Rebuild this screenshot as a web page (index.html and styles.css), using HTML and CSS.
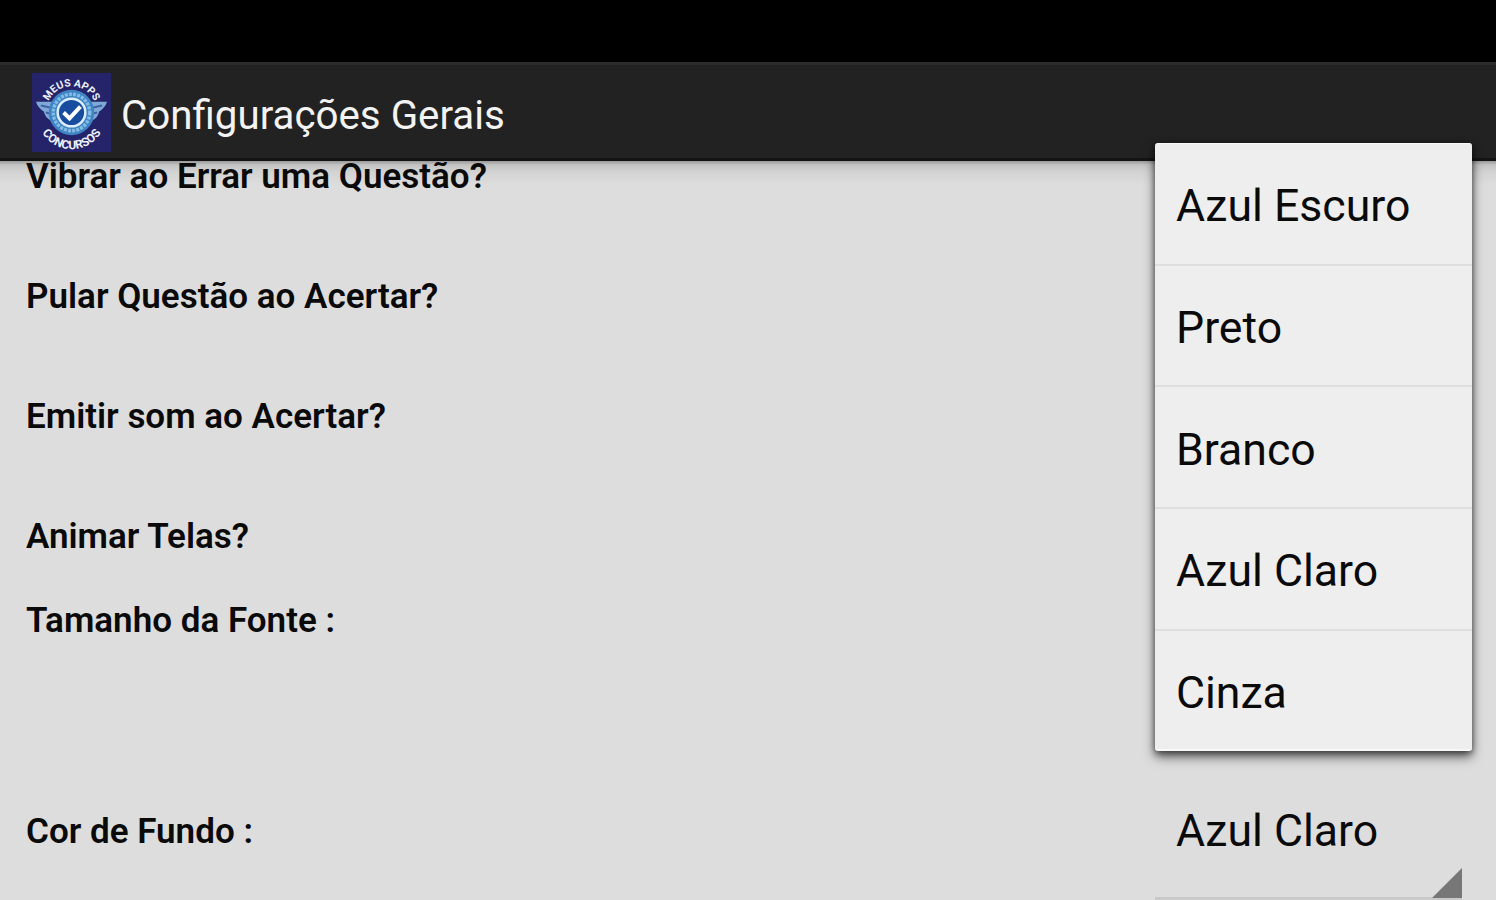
FILE: index.html
```html
<!DOCTYPE html>
<html lang="pt-BR">
<head>
    <meta charset="UTF-8">
    <meta name="viewport" content="width=device-width, initial-scale=1.0">
    <title>Configurações Gerais</title>
    <link rel="stylesheet" href="styles.css">
</head>
<body>
    <div class="status-bar"></div>
    <header class="action-bar">
        <svg class="logo" viewBox="0 0 80 80">
            <defs>
                <path id="arcTop" d="M14.500 39A25.500 25.500 0 0 1 65.500 39" />
                <path id="arcBottom" d="M5.500 48A35 35 0 0 0 74.500 48" />
            </defs>
            <rect width="80" height="80" fill="#25246b" />
            <path d="M4 29L26 29L31 54Q22 54 19 48Q13 45 12 39Q6 35 4 29Z" fill="#7fa9d6" />
            <path d="M76 29L54 29L49 54Q58 54 61 48Q67 45 68 39Q74 35 76 29Z" fill="#7fa9d6" />
            <path d="M9 33L27 37M14 40L26 43M71 33L53 37M66 40L54 43" stroke="#3f63a4" stroke-width="2" />
            <circle cx="40" cy="40" r="23" fill="#3f83c2" />
            <circle cx="40" cy="40" r="18.500" fill="none" stroke="#82bce6" stroke-width="3.500" stroke-dasharray="3 1.200" />
            <circle cx="40" cy="40" r="14" fill="#174c9e" stroke="#dceefa" stroke-width="2.500" />
            <path d="M32 40L38 46L49 34" fill="none" stroke="#fff" stroke-width="4" />
            <text class="logo-text"><textPath href="#arcTop" startOffset="50%">MEUS APPS</textPath></text>
            <text class="logo-text logo-text-bottom"><textPath href="#arcBottom" startOffset="50%">CONCURSOS</textPath></text>
        </svg>
        <h1>Configurações Gerais</h1>
    </header>

    <main class="content">
        <div class="settings">
            <div class="row">Vibrar ao Errar uma Questão?</div>
            <div class="row">Pular Questão ao Acertar?</div>
            <div class="row">Emitir som ao Acertar?</div>
            <div class="row">Animar Telas?</div>
            <div class="row row-font">Tamanho da Fonte :</div>
            <div class="row row-color">
                <label>Cor de Fundo :</label>
                <div class="spinner">
                    Azul Claro
                    <svg class="arrow" viewBox="0 0 30 30"><path d="M30 0V30H0Z" fill="#777" /></svg>
                </div>
            </div>
        </div>
    </main>

    <ul class="dropdown">
        <li>Azul Escuro</li>
        <li>Preto</li>
        <li>Branco</li>
        <li>Azul Claro</li>
        <li>Cinza</li>
    </ul>
</body>
</html>
```

FILE: styles.css
```css
* { box-sizing: border-box; }
body { margin: 0; height: 900px; overflow: hidden; display: flex; flex-direction: column; background: #ddd; color: #0a0a0a; font-family: Roboto, sans-serif; }
.status-bar { height: 62px; flex: none; background: #000; }

.action-bar { height: 99px; flex: none; display: flex; align-items: center; gap: 9px; padding: 2px 0 0 31px; background: #222; border-top: 3px solid #2b2b2b; border-bottom: 3px solid #141414; }
.logo { width: 81px; height: 79px; }
.logo-text { font: bold 10.500px Roboto, sans-serif; fill: #eef2fa; text-anchor: middle; }
.logo-text-bottom { font-size: 12px; }
h1 { margin: 6px 0 0; font-size: 40.300px; font-weight: 400; color: #f3f3f3; white-space: nowrap; }

/* list is scrolled, the first row is cut by the action bar */
.content { flex: 1; overflow: hidden; background: linear-gradient(#999 0, #c4c4c4 4px, #d3d3d3 11px, #ddd 24px); }
.settings { margin-top: -45px; }
.row { height: 120px; padding-left: 26px; display: flex; align-items: center; font-size: 35px; font-weight: 600; }
.row-font { height: 168px; align-items: flex-start; padding-top: 4px; }
.row-color { height: 136px; align-items: stretch; justify-content: space-between; padding-right: 34px; line-height: 40px; }
.row-color label { padding-top: 48px; }
.spinner { width: 307px; padding: 47px 0 0 21px; position: relative; font-size: 44.600px; font-weight: 400; border-bottom: 3px solid #c9c9c9; }
.arrow { position: absolute; right: 0; bottom: -1px; width: 30px; height: 30px; }

.dropdown { position: absolute; left: 1155px; top: 143px; width: 317px; height: 608px; margin: 0; padding: 0; list-style: none; background: #eee; border-top: 1px solid #fafafa; border-bottom: 2px solid #f8f8f8; border-radius: 3px; box-shadow: 0 6px 12px rgba(0, 0, 0, .55), 0 2px 6px rgba(0, 0, 0, .5); }
.dropdown li { height: 121.700px; display: flex; align-items: center; padding: 5px 0 0 21px; font-size: 44.600px; border-bottom: 2px solid #dedede; }
.dropdown li:last-child { height: 118px; padding-top: 7px; border-bottom: none; }
```
